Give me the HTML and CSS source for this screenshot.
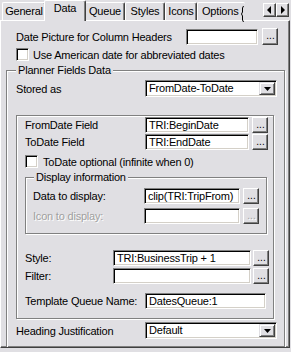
FILE: index.html
```html
<!DOCTYPE html>
<html>
<head>
<meta charset="utf-8">
<link rel="stylesheet" href="styles.css">
</head>
<body>
<div class="dlg">
  <div class="tabbar">
    <div class="tab t-general">General</div>
    <div class="tab t-data sel">Data</div>
    <div class="tab t-queue">Queue</div>
    <div class="tab t-styles">Styles</div>
    <div class="tab t-icons">Icons</div>
    <div class="tab t-options">Options<svg class="tear" width="5" height="16" viewBox="0 0 5 16"><path d="M3.5 0 L2.5 2 L2.5 6 L1.5 8 L2.5 10 L2.5 14 L3.5 16" fill="none" stroke="#000" stroke-width="1"/></svg></div>
    <div class="spin">
      <div class="sbtn"><svg width="5" height="8" viewBox="0 0 5 8"><path d="M4 0 V8 L0 4 Z" fill="#000"/></svg></div>
      <div class="sbtn"><svg width="5" height="8" viewBox="0 0 5 8"><path d="M1 0 V8 L5 4 Z" fill="#000"/></svg></div>
    </div>
  </div>
  <div class="panel">
    <div class="row r-datepic">
      <span class="lbl w-datepic">Date Picture for Column Headers</span>
      <span class="edit e-datepic"></span>
      <span class="btn b-datepic">...</span>
    </div>
    <div class="row r-american">
      <span class="cb"></span>
      <span class="cbtext">Use American date for abbreviated dates</span>
    </div>
    <div class="group g-planner">
      <div class="legend">Planner Fields Data</div>
      <div class="row r-stored">
        <span class="lbl w-stored">Stored as</span>
        <span class="combo c-stored"><span class="ctext">FromDate-ToDate</span><span class="cbtn"><svg width="7" height="4" viewBox="0 0 7 4"><path d="M0 0 H7 L3.5 4 Z" fill="#000"/></svg></span></span>
      </div>
      <div class="inner">
        <div class="row r-from">
          <span class="lbl w-from">FromDate Field</span>
          <span class="edit e-from">TRI:BeginDate</span>
          <span class="btn b-from">...</span>
        </div>
        <div class="row r-to">
          <span class="lbl w-from">ToDate Field</span>
          <span class="edit e-from">TRI:EndDate</span>
          <span class="btn b-from">...</span>
        </div>
        <div class="row r-optional">
          <span class="cb"></span>
          <span class="cbtext2">ToDate optional (infinite when 0)</span>
        </div>
        <div class="group g-display">
          <div class="legend lg-display">Display information</div>
          <div class="row r-data">
            <span class="lbl w-data">Data to display:</span>
            <span class="edit e-data">clip(TRI:TripFrom)</span>
            <span class="btn b-data">...</span>
          </div>
          <div class="row r-icon">
            <span class="lbl w-data disabled">Icon to display:</span>
            <span class="edit e-data"></span>
            <span class="btn b-data disabled">...</span>
          </div>
        </div>
        <div class="row r-style">
          <span class="lbl w-style">Style:</span>
          <span class="edit e-style">TRI:BusinessTrip + 1</span>
          <span class="btn b-style">...</span>
        </div>
        <div class="row r-filter">
          <span class="lbl w-style">Filter:</span>
          <span class="edit e-style"></span>
          <span class="btn b-style">...</span>
        </div>
        <div class="row r-template">
          <span class="lbl w-template">Template Queue Name:</span>
          <span class="edit e-template">DatesQueue:1</span>
        </div>
      </div>
      <div class="row r-heading">
        <span class="lbl w-heading">Heading Justification</span>
        <span class="combo c-heading"><span class="ctext">Default</span><span class="cbtn"><svg width="7" height="4" viewBox="0 0 7 4"><path d="M0 0 H7 L3.5 4 Z" fill="#000"/></svg></span></span>
      </div>
    </div>
  </div>
</div>
</body>
</html>
```

FILE: styles.css
```css
* { box-sizing: border-box; }
html, body {
  margin: 0;
  padding: 0;
  background: #e0dfe3;
}
body {
  font-family: "Liberation Sans", Arial, sans-serif;
  font-size: 11px;
  letter-spacing: -0.2px;
  color: #000;
  width: 291px;
  height: 352px;
  overflow: hidden;
}
.dlg { width: 291px; }

/* tabs */
.tabbar {
  display: flex;
  align-items: flex-end;
  height: 20px;
  padding-left: 2px;
}
.tab {
  position: relative;
  height: 18px;
  border-top: 1px solid #fff;
  border-left: 1px solid #fff;
  border-right: 1px solid #404040;
  box-shadow: inset -1px 0 #808080;
  border-radius: 2px 2px 0 0;
  text-align: center;
  padding-top: 2px;
  line-height: 13px;
  white-space: nowrap;
}
.t-general { width: 44px; }
.t-data { width: 40px; }
.t-queue { width: 40px; }
.t-styles { width: 40px; }
.t-icons { width: 32px; }
.t-options {
  width: 48px;
  border-right: none;
  box-shadow: none;
  text-align: left;
  padding-left: 4px;
  display: flex;
}
.tear { margin-left: 1px; margin-top: 1px; }
.tab.sel {
  height: 21px;
  margin: 0 -1px -1px -2px;
  width: 42px;
  padding-top: 1px;
  background: #e0dfe3;
  z-index: 1;
}
.spin {
  display: flex;
  margin-left: auto;
  margin-right: 2px;
  align-self: flex-start;
  margin-top: 3px;
}
.sbtn {
  width: 13px;
  height: 14px;
  border: 1px solid;
  border-color: #fff #404040 #404040 #fff;
  box-shadow: inset -1px -1px #808080;
  display: flex;
  align-items: center;
  justify-content: center;
}

/* panel */
.panel {
  width: 290px;
  height: 328px;
  border: 1px solid;
  border-color: #fff #404040 #404040 #fff;
  box-shadow: inset -1px -1px #808080;
  overflow: hidden;
  padding: 0 3px 0 5px;
}

.row {
  display: flex;
  align-items: center;
  white-space: nowrap;
}
.lbl { flex: none; }
.disabled { color: #a0a0a0; text-shadow: 1px 1px #fff; }

.edit {
  flex: none;
  display: block;
  height: 16px;
  background: #fff;
  border: 1px solid;
  border-color: #808080 #fff #fff #808080;
  box-shadow: inset 1px 1px #000, inset -1px -1px #d4d0c8;
  padding: 1px 0 0 3px;
  line-height: 13px;
  overflow: hidden;
}
.btn {
  flex: none;
  display: block;
  width: 16px;
  height: 16px;
  border: 1px solid;
  border-color: #fff #404040 #404040 #fff;
  box-shadow: inset -1px -1px #808080;
  text-align: center;
  line-height: 14px;
  font-size: 10px;
  letter-spacing: 0;
  padding-left: 1px;
}
.btn.disabled { color: #a0a0a0; }
.cb {
  flex: none;
  width: 13px;
  height: 13px;
  background: #fff;
  border: 1px solid;
  border-color: #808080 #fff #fff #808080;
  box-shadow: inset 1px 1px #000, inset -1px -1px #d4d0c8;
}
.combo {
  flex: none;
  display: flex;
  height: 17px;
  background: #fff;
  border: 1px solid;
  border-color: #808080 #fff #fff #808080;
  box-shadow: inset 1px 1px #000, inset -1px -1px #d4d0c8;
  padding: 1px;
}
.ctext {
  flex: 1;
  padding-left: 2px;
  line-height: 13px;
}
.cbtn {
  flex: none;
  width: 16px;
  height: 13px;
  background: #e0dfe3;
  border: 1px solid;
  border-color: #e0dfe3 #404040 #404040 #e0dfe3;
  box-shadow: inset 1px 1px #fff, inset -1px -1px #808080;
  display: flex;
  align-items: center;
  justify-content: center;
}

/* groups */
.group {
  border: 1px solid #808080;
  box-shadow: inset 1px 1px #fff, 1px 1px #fff;
}
.legend {
  width: fit-content;
  height: 13px;
  line-height: 13px;
  margin: -7px 0 0 9px;
  padding: 0 2px;
  background: #e0dfe3;
  white-space: nowrap;
}

.r-datepic { margin-top: 7px; padding-left: 10px; height: 17px; }
.w-datepic { width: 170px; }
.e-datepic { width: 72px; }
.b-datepic { margin-left: 4px; height: 17px; }

.r-american { margin-top: 3px; padding-left: 10px; height: 13px; }
.cbtext { margin-left: 4px; }

.g-planner {
  margin-top: 9px;
  width: 279px;
  height: 320px;
}
.r-stored { margin-top: 3px; padding-left: 9px; height: 17px; }
.w-stored { width: 129px; }
.c-stored { width: 132px; }

.inner {
  margin: 18px 0 0 9px;
  width: 258px;
  height: 204px;
  border: 1px solid #808080;
  box-shadow: inset 1px 1px #fff, 1px 1px #fff;
}
.r-from { margin-top: 1px; padding-left: 8px; height: 16px; }
.r-to { margin-top: 1px; padding-left: 8px; height: 16px; }
.w-from { width: 120px; }
.e-from { width: 104px; }
.b-from { margin-left: 3px; }

.r-optional { margin-top: 5px; padding-left: 8px; height: 13px; }
.cbtext2 { margin-left: 5px; }

.g-display {
  margin: 9px 0 0 8px;
  width: 242px;
  height: 57px;
}
.lg-display { margin-left: 8px; }
.r-data { margin-top: 4px; padding-left: 7px; height: 16px; }
.r-icon { margin-top: 4px; padding-left: 7px; height: 16px; }
.w-data { width: 111px; }
.e-data { width: 96px; }
.b-data { margin-left: 3px; }

.r-style { margin-top: 16px; padding-left: 8px; height: 16px; }
.r-filter { margin-top: 2px; padding-left: 8px; height: 16px; }
.w-style { width: 88px; }
.e-style { width: 138px; }
.b-style { margin-left: 2px; }

.r-template { margin-top: 9px; padding-left: 8px; height: 16px; }
.w-template { width: 120px; }
.e-template { width: 121px; }

.r-heading { margin-top: 3px; padding-left: 9px; height: 17px; }
.w-heading { width: 129px; }
.c-heading { width: 132px; }
```
